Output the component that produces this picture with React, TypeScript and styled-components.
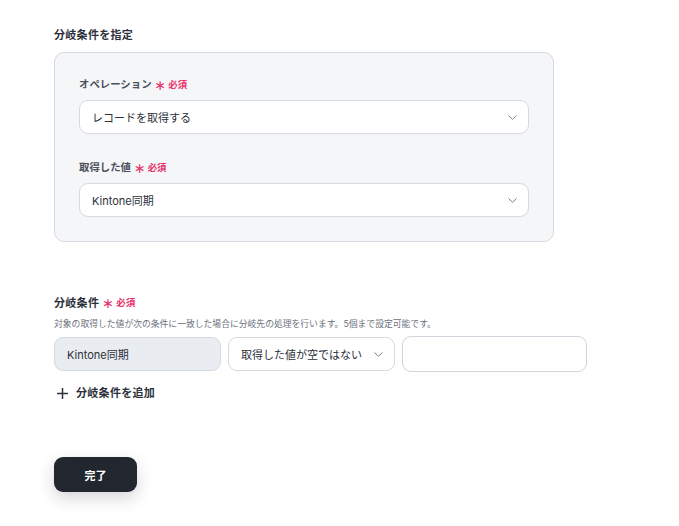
import React from "react";
import styled, { createGlobalStyle } from "styled-components";

const Global = createGlobalStyle`
  html, body { margin: 0; padding: 0; background: #ffffff; }
  body {
    font-family: "Inter", "Noto Sans CJK JP", sans-serif;
    color: #2b303a;
    -webkit-font-smoothing: antialiased;
  }
`;

const Page = styled.div`
  width: 679px;
  height: 526px;
  box-sizing: border-box;
  padding: 27px 0 0 54px;
  display: flex;
  flex-direction: column;
`;

const SectionTitle = styled.div`
  font-size: 11px;
  font-weight: 700;
  letter-spacing: 0.3px;
  line-height: 16px;
  color: #2b303a;
`;

const Panel = styled.div`
  margin-top: 9px;
  width: 500px;
  box-sizing: border-box;
  padding: 25px 24px 24px 24px;
  background: #f5f6f8;
  border: 1px solid #d5dae1;
  border-radius: 10px;
  display: flex;
  flex-direction: column;
  gap: 27px;
`;

const Field = styled.div`
  display: flex;
  flex-direction: column;
  gap: 8px;
`;

const Label = styled.div<{ $tone?: "dark" | "muted" }>`
  display: flex;
  align-items: center;
  gap: 3px;
  height: 14px;
  font-size: ${(p) => (p.$tone === "dark" ? "11px" : "10.4px")};
  font-weight: ${(p) => (p.$tone === "dark" ? 700 : 600)};
  line-height: 14px;
  color: ${(p) => (p.$tone === "dark" ? "#2b303a" : "#4a505c")};
  letter-spacing: ${(p) => (p.$tone === "dark" ? "0.3px" : "0")};
`;

const Required = styled.span`
  display: inline-flex;
  align-items: center;
  gap: 2px;
  color: #e8336b;
  font-size: 9.4px;
  font-weight: 600;
  line-height: 14px;
`;

const Star = styled.span`
  display: inline-block;
  font-family: "DejaVu Sans", sans-serif;
  font-size: 14px;
  line-height: 14px;
  font-weight: 400;
`;

const SelectBox = styled.div<{ $width?: number }>`
  box-sizing: border-box;
  height: 34px;
  width: ${(p) => (p.$width ? `${p.$width}px` : "100%")};
  padding: 0 11px 0 12px;
  background: #ffffff;
  border: 1px solid #d5dae1;
  border-radius: 9px;
  display: flex;
  align-items: center;
  justify-content: space-between;
  font-size: 11px;
  color: #2b303a;
  flex-shrink: 0;
`;

const ReadOnlyBox = styled.div`
  box-sizing: border-box;
  height: 34px;
  width: 167px;
  padding: 0 12px;
  background: #e9ecf1;
  border: 1px solid #d5dae1;
  border-radius: 9px;
  display: flex;
  align-items: center;
  font-size: 11px;
  color: #2b303a;
  flex-shrink: 0;
`;

const TextInput = styled.div`
  box-sizing: border-box;
  height: 36px;
  width: 185px;
  background: #ffffff;
  border: 1px solid #d0d6de;
  border-radius: 9px;
  flex-shrink: 0;
`;

const ConditionSection = styled.div`
  margin-top: 54px;
  display: flex;
  flex-direction: column;
`;

const Description = styled.div`
  margin-top: 8px;
  font-size: 8.8px;
  line-height: 12px;
  color: #6b717c;
`;

const ConditionRow = styled.div`
  margin-top: 6px;
  display: flex;
  align-items: center;
  gap: 7px;
`;

const AddButton = styled.div`
  margin-top: 13px;
  margin-left: 3px;
  display: flex;
  align-items: center;
  gap: 8px;
  font-size: 11px;
  font-weight: 700;
  letter-spacing: 0.3px;
  line-height: 16px;
  color: #2b303a;
`;

const DoneButton = styled.div`
  margin-top: 56px;
  width: 83px;
  height: 35px;
  border-radius: 9px;
  background: #22272f;
  color: #ffffff;
  font-size: 11px;
  font-weight: 700;
  display: flex;
  align-items: center;
  justify-content: center;
  box-shadow: 0 6px 16px rgba(20, 24, 32, 0.18);
`;

const Chevron = () => (
  <svg width="9" height="5" viewBox="0 0 9 5" fill="none">
    <path d="M0.8 0.8l3.7 3.5 3.7-3.5" stroke="#7a808a" strokeWidth="1" strokeLinecap="round" strokeLinejoin="round" />
  </svg>
);

const Plus = () => (
  <svg width="11" height="11" viewBox="0 0 11 11" fill="none">
    <path d="M5.5 0.5v10M0.5 5.5h10" stroke="#2b303a" strokeWidth="1.5" strokeLinecap="round" />
  </svg>
);

const RequiredMark = () => (
  <Required>
    <Star>∗</Star>必須
  </Required>
);

export default function App() {
  return (
    <>
      <Global />
      <Page>
        <SectionTitle>分岐条件を指定</SectionTitle>
        <Panel>
          <Field>
            <Label>
              オペレーション
              <RequiredMark />
            </Label>
            <SelectBox>
              <span>レコードを取得する</span>
              <Chevron />
            </SelectBox>
          </Field>
          <Field>
            <Label>
              取得した値
              <RequiredMark />
            </Label>
            <SelectBox>
              <span>Kintone同期</span>
              <Chevron />
            </SelectBox>
          </Field>
        </Panel>

        <ConditionSection>
          <Label $tone="dark">
            分岐条件
            <RequiredMark />
          </Label>
          <Description>
            対象の取得した値が次の条件に一致した場合に分岐先の処理を行います。5個まで設定可能です。
          </Description>
          <ConditionRow>
            <ReadOnlyBox>Kintone同期</ReadOnlyBox>
            <SelectBox $width={167}>
              <span>取得した値が空ではない</span>
              <Chevron />
            </SelectBox>
            <TextInput />
          </ConditionRow>
          <AddButton>
            <Plus />
            分岐条件を追加
          </AddButton>
        </ConditionSection>

        <DoneButton>完了</DoneButton>
      </Page>
    </>
  );
}
